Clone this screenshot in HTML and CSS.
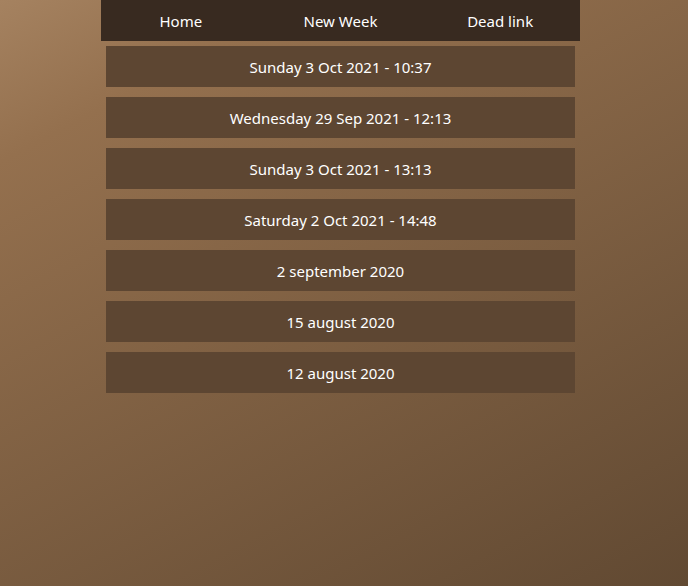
FILE: index.html
```html
<!DOCTYPE html>
<html lang="en">
<head>
<meta charset="utf-8">
<meta name="viewport" content="width=device-width, initial-scale=1">
<title>Weeks</title>
<link rel="stylesheet" href="styles.css">
</head>
<body>
<nav class="menu">
  <a class="menu-link" href="#home">Home</a>
  <a class="menu-link" href="#new">New Week</a>
  <a class="menu-link" href="#dead">Dead link</a>
</nav>
<main class="weeks">
  <a class="week" href="#w1">Sunday 3 Oct 2021 - 10:37</a>
  <a class="week" href="#w2">Wednesday 29 Sep 2021 - 12:13</a>
  <a class="week" href="#w3">Sunday 3 Oct 2021 - 13:13</a>
  <a class="week" href="#w4">Saturday 2 Oct 2021 - 14:48</a>
  <a class="week" href="#w5">2 september 2020</a>
  <a class="week" href="#w6">15 august 2020</a>
  <a class="week" href="#w7">12 august 2020</a>
</main>
</body>
</html>
```
FILE: styles.css
```css
* {
  box-sizing: border-box;
}

body {
  margin: 0;
  min-height: 100vh;
  padding: 0 108px 0 101px;
  background: linear-gradient(152deg, #a58260 0%, #94704e 17%, #614932 100%);
  font: 15px/21px "Segoe UI", "Noto Sans", "Open Sans", sans-serif;
}

.menu {
  display: grid;
  grid-template-columns: repeat(3, 1fr);
  background: #382a20;
}

.menu-link,
.week {
  padding: 11px 10px 9px;
  color: #fff;
  text-align: center;
  text-decoration: none;
}

.weeks {
  display: grid;
  gap: 10px;
  padding: 5px;
}

.week {
  background: #5d4632;
}
```
